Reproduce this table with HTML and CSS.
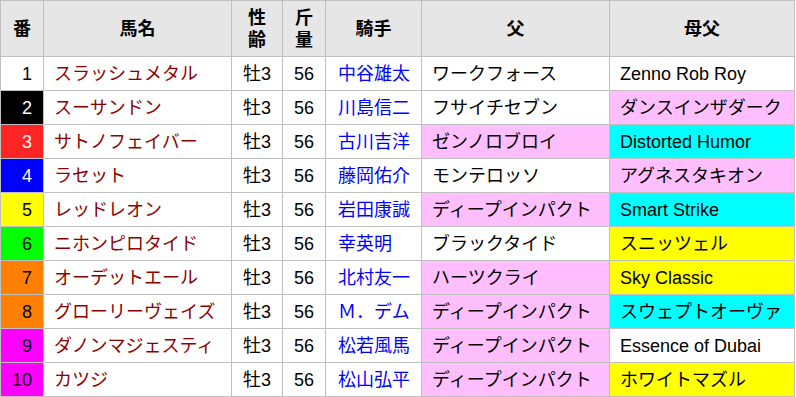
FILE: index.html
```html
<!DOCTYPE html>
<html lang="ja">
<head>
<meta charset="utf-8">
<title>出馬表</title>
<link rel="stylesheet" href="styles.css">
</head>
<body>
<table class="entries">
  <colgroup>
    <col class="c-no"><col class="c-name"><col class="c-sex"><col class="c-wt"><col class="c-jk"><col class="c-sire"><col class="c-bms">
  </colgroup>
  <thead>
    <tr><th>番</th><th>馬名</th><th>性齢</th><th>斤量</th><th>騎手</th><th>父</th><th>母父</th></tr>
  </thead>
  <tbody>
    <tr><td class="no w1">1</td><td class="name">スラッシュメタル</td><td class="ctr">牡3</td><td class="ctr">56</td><td class="jk">中谷雄太</td><td>ワークフォース</td><td>Zenno Rob Roy</td></tr>
    <tr><td class="no w2">2</td><td class="name">スーサンドン</td><td class="ctr">牡3</td><td class="ctr">56</td><td class="jk">川島信二</td><td>フサイチセブン</td><td class="pink">ダンスインザダーク</td></tr>
    <tr><td class="no w3">3</td><td class="name">サトノフェイバー</td><td class="ctr">牡3</td><td class="ctr">56</td><td class="jk">古川吉洋</td><td class="pink">ゼンノロブロイ</td><td class="cyan">Distorted Humor</td></tr>
    <tr><td class="no w4">4</td><td class="name">ラセット</td><td class="ctr">牡3</td><td class="ctr">56</td><td class="jk">藤岡佑介</td><td>モンテロッソ</td><td class="pink">アグネスタキオン</td></tr>
    <tr><td class="no w5">5</td><td class="name">レッドレオン</td><td class="ctr">牡3</td><td class="ctr">56</td><td class="jk">岩田康誠</td><td class="pink">ディープインパクト</td><td class="cyan">Smart Strike</td></tr>
    <tr><td class="no w6">6</td><td class="name">ニホンピロタイド</td><td class="ctr">牡3</td><td class="ctr">56</td><td class="jk">幸英明</td><td>ブラックタイド</td><td class="yellow">スニッツェル</td></tr>
    <tr><td class="no w7">7</td><td class="name">オーデットエール</td><td class="ctr">牡3</td><td class="ctr">56</td><td class="jk">北村友一</td><td class="pink">ハーツクライ</td><td class="yellow">Sky Classic</td></tr>
    <tr><td class="no w7">8</td><td class="name">グローリーヴェイズ</td><td class="ctr">牡3</td><td class="ctr">56</td><td class="jk">Ｍ．デム</td><td class="pink">ディープインパクト</td><td class="cyan">スウェプトオーヴァ</td></tr>
    <tr><td class="no w8">9</td><td class="name">ダノンマジェスティ</td><td class="ctr">牡3</td><td class="ctr">56</td><td class="jk">松若風馬</td><td class="pink">ディープインパクト</td><td>Essence of Dubai</td></tr>
    <tr><td class="no w8">10</td><td class="name">カツジ</td><td class="ctr">牡3</td><td class="ctr">56</td><td class="jk">松山弘平</td><td class="pink">ディープインパクト</td><td class="yellow">ホワイトマズル</td></tr>
  </tbody>
</table>
</body>
</html>
```
FILE: styles.css
```css
html, body {
  margin: 0;
  padding: 0;
  background: #ffffff;
}

.entries {
  border-collapse: collapse;
  table-layout: fixed;
  width: 794px;
  font-family: "Liberation Sans", Arial, "Noto Sans CJK JP", sans-serif;
  font-size: 18px;
  color: #000000;
}

.c-no { width: 43px; }
.c-name { width: 188px; }
.c-sex { width: 51px; }
.c-wt { width: 43px; }
.c-jk { width: 96px; }
.c-sire { width: 188px; }
.c-bms { width: 185px; }

.entries th,
.entries td {
  border: 1px solid #c0c0c0;
  padding: 0 10px;
  white-space: nowrap;
  overflow: hidden;
}

.entries th {
  height: 55px;
  background: #e6e6e6;
  font-weight: bold;
  text-align: center;
  line-height: 22px;
  white-space: normal;
  padding: 0 9px;
}

.entries td {
  height: 33px;
  line-height: 22px;
  text-align: left;
}

.entries td.no {
  text-align: right;
  padding-right: 11px;
}

.entries td.ctr {
  text-align: center;
  padding: 0 4px;
}

.entries td.name { color: #8b0000; }
.entries td.jk { color: #0000ff; padding-left: 12px; }

.w1 { background: #ffffff; color: #000000; }
.w2 { background: #000000; color: #ffffff; }
.w3 { background: #ff2525; color: #ffffff; }
.w4 { background: #0000ff; color: #ffffff; }
.w5 { background: #ffff00; color: #000000; }
.w6 { background: #00ff00; color: #000000; }
.w7 { background: #ff8000; color: #000000; }
.w8 { background: #ff00ff; color: #000000; }

.pink { background: #ffbfff; }
.cyan { background: #00ffff; }
.yellow { background: #ffff00; }
```
